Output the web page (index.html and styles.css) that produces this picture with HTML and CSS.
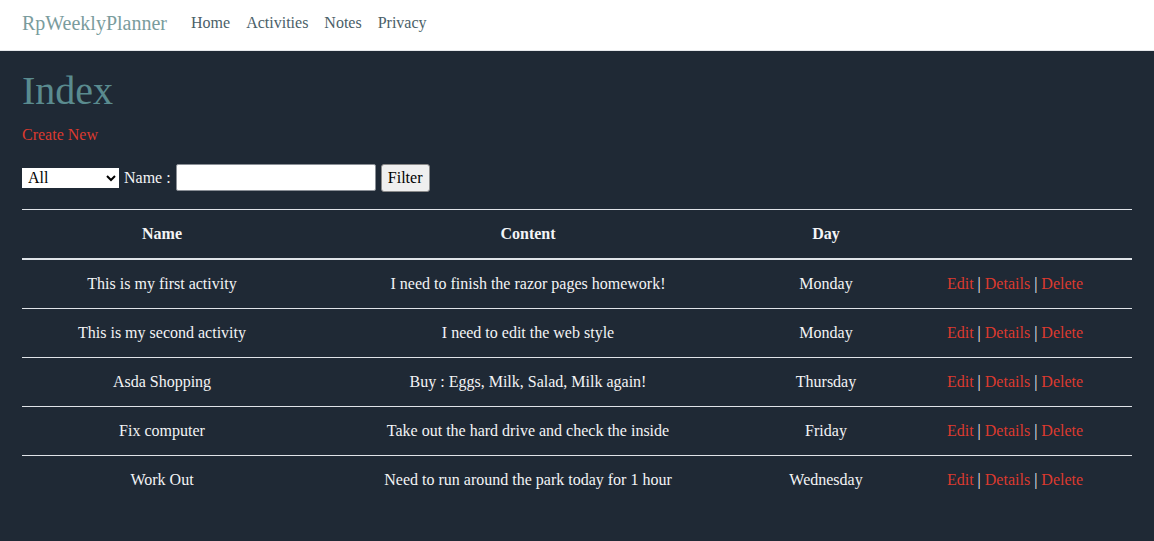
FILE: index.html
```html
<!DOCTYPE html>
<html>
<head>
<meta charset="utf-8">
<title>Index - RpWeeklyPlanner</title>
<link rel="stylesheet" href="styles.css">
</head>
<body>
<header class="navbar">
  <a class="brand" href="#">RpWeeklyPlanner</a>
  <nav class="nav">
    <a href="#">Home</a>
    <a href="#">Activities</a>
    <a href="#">Notes</a>
    <a href="#">Privacy</a>
  </nav>
</header>
<main class="container">
  <h1 class="title">Index</h1>
  <p class="create"><a href="#">Create New</a></p>
  <form class="filter">
    <select class="day-select"><option>All</option></select>
    <span class="label">Name :</span>
    <input class="name-input" type="text">
    <button class="filter-btn" type="button">Filter</button>
  </form>
  <table class="table">
    <colgroup>
      <col class="c-name"><col class="c-content"><col class="c-day"><col class="c-actions">
    </colgroup>
    <thead>
      <tr><th>Name</th><th>Content</th><th>Day</th><th></th></tr>
    </thead>
    <tbody>
      <tr><td>This is my first activity</td><td>I need to finish the razor pages homework!</td><td>Monday</td><td><a href="#">Edit</a> | <a href="#">Details</a> | <a href="#">Delete</a></td></tr>
      <tr><td>This is my second activity</td><td>I need to edit the web style</td><td>Monday</td><td><a href="#">Edit</a> | <a href="#">Details</a> | <a href="#">Delete</a></td></tr>
      <tr><td>Asda Shopping</td><td>Buy : Eggs, Milk, Salad, Milk again!</td><td>Thursday</td><td><a href="#">Edit</a> | <a href="#">Details</a> | <a href="#">Delete</a></td></tr>
      <tr><td>Fix computer</td><td>Take out the hard drive and check the inside</td><td>Friday</td><td><a href="#">Edit</a> | <a href="#">Details</a> | <a href="#">Delete</a></td></tr>
      <tr><td>Work Out</td><td>Need to run around the park today for 1 hour</td><td>Wednesday</td><td><a href="#">Edit</a> | <a href="#">Details</a> | <a href="#">Delete</a></td></tr>
    </tbody>
  </table>
</main>
</body>
</html>
```
FILE: styles.css
```css
* { box-sizing: border-box; }
html, body { margin: 0; padding: 0; }
body {
  background: #1f2935;
  color: #f3f4f6;
  font-family: "Liberation Serif", "Times New Roman", serif;
  font-size: 16px;
  line-height: 24px;
  min-height: 541px;
}
a { text-decoration: none; }
.navbar {
  background: #ffffff;
  height: 51px;
  border-bottom: 1px solid #e5e7eb;
  display: flex;
  align-items: center;
  padding: 0 22px;
}
.brand {
  color: #7a9c9d;
  font-size: 20px;
  line-height: 30px;
  margin-right: 16px;
  padding-bottom: 4px;
}
.nav { display: flex; gap: 0; padding-bottom: 5px; }
.nav a {
  color: #4a6068;
  padding: 0 8px;
  font-size: 16px;
}
.container {
  padding: 16px 22px 0 22px;
}
.title {
  margin: 0 0 8px 0;
  font-size: 40px;
  line-height: 48px;
  font-weight: normal;
  color: #5a8b8f;
}
.create { margin: 0 0 16px 0; }
.create a, .table a { color: #dc3a2f; }
.filter {
  display: flex;
  align-items: center;
  height: 29px;
  margin-bottom: 17px;
}
.day-select {
  width: 97px;
  height: 20px;
  border: none;
  border-radius: 0;
  background: #fff;
  font-family: "Liberation Serif", serif;
  font-size: 16px;
  padding: 0 0 0 2px;
  color: #000;
}
.label { margin-left: 5px; margin-right: 5px; }
.name-input {
  width: 200px;
  height: 27px;
  border: 1px solid #8a8f96;
  border-radius: 2px;
  background: #fff;
  font-family: "Liberation Serif", serif;
  font-size: 16px;
}
.filter-btn {
  margin-left: 5px;
  width: 49px;
  height: 28px;
  background: #efefef;
  border: 1px solid #8a8a8a;
  border-radius: 3px;
  font-family: "Liberation Serif", serif;
  font-size: 16px;
  color: #000;
  padding: 0;
}
.table {
  width: 1110px;
  border-collapse: collapse;
  table-layout: fixed;
}
.c-name { width: 280px; }
.c-content { width: 452px; }
.c-day { width: 144px; }
.c-actions { width: 234px; }
.table th, .table td {
  text-align: center;
  padding: 12px;
  border-top: 1px solid #dfe3e8;
  line-height: 24px;
}
.table th { font-weight: bold; }
.table thead th { border-bottom: 2px solid #dfe3e8; }
.table thead + tbody tr:first-child td { border-top: none; }
```
